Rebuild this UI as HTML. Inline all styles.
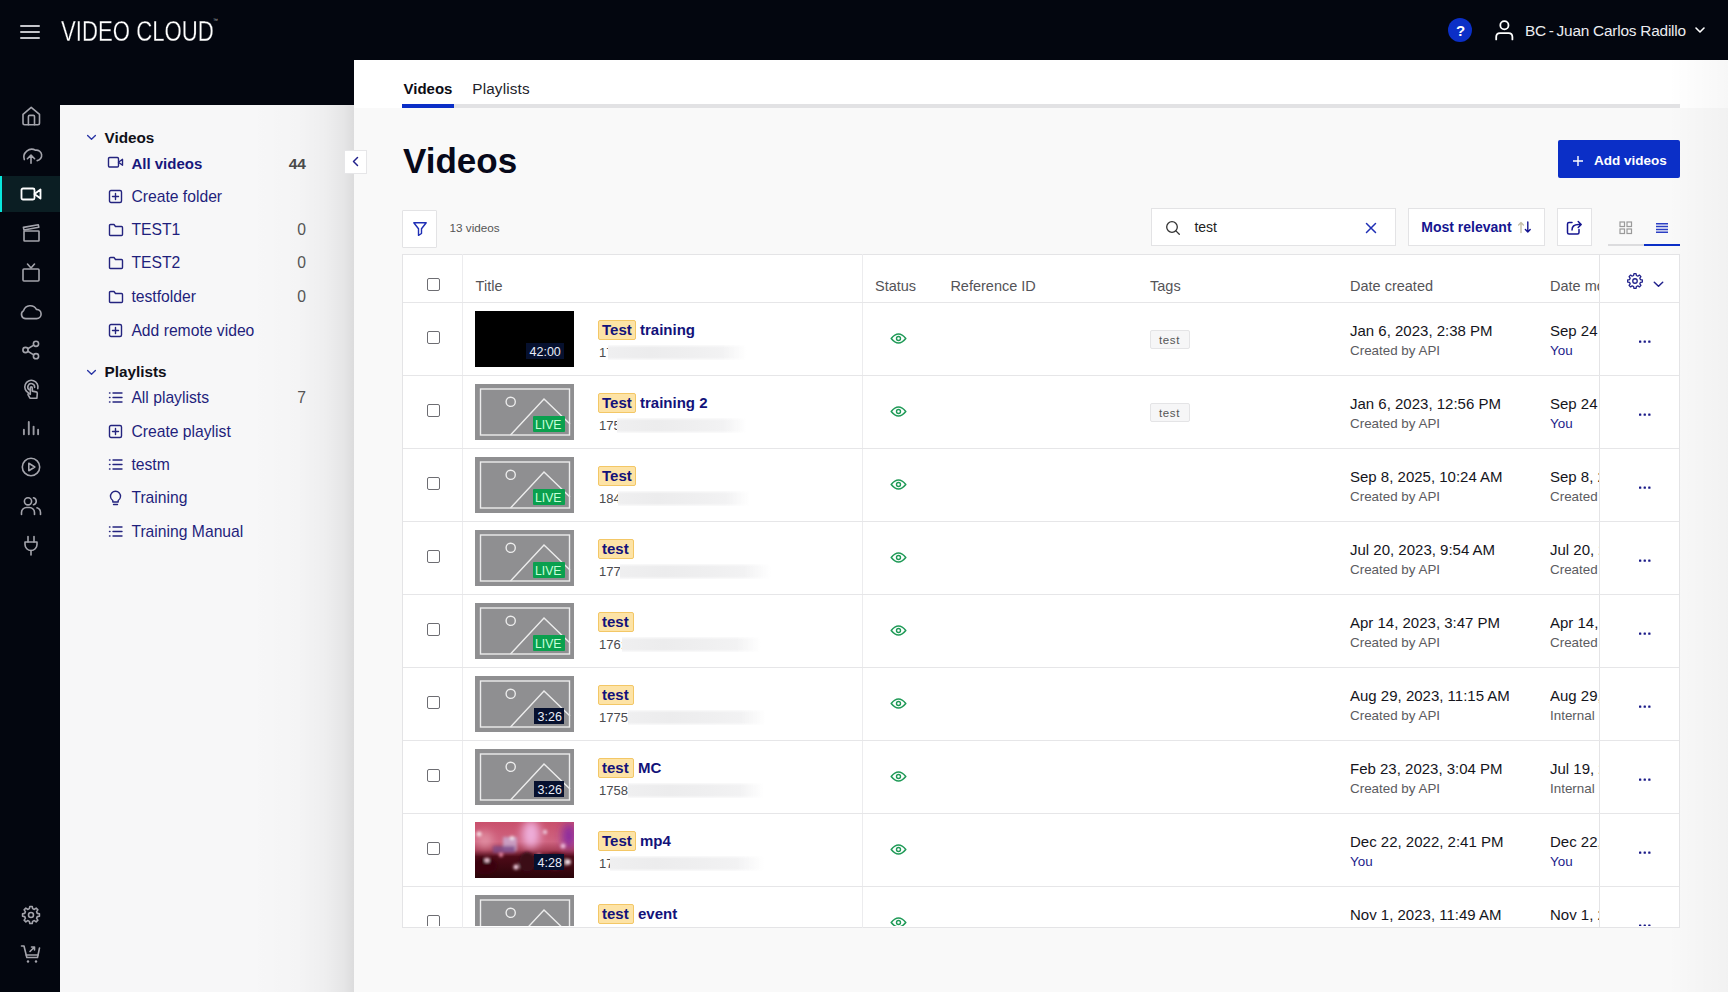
<!DOCTYPE html>
<html><head><meta charset="utf-8"><style>
*{box-sizing:border-box;margin:0;padding:0}
html,body{width:1728px;height:992px;overflow:hidden;background:#03060f;font-family:"Liberation Sans",sans-serif;position:relative}
.a{position:absolute}
.t{position:absolute;white-space:nowrap}
svg.a{overflow:visible}
</style></head><body>
<div class="a" style="left:0px;top:0px;width:1728px;height:60px;background:#03060f"></div>
<div class="a" style="left:354px;top:60px;width:1374px;height:932px;background:#f9f9f9"></div>
<div class="a" style="left:354px;top:60px;width:1374px;height:48px;background:#fff"></div>
<div class="a" style="left:60px;top:105px;width:294px;height:887px;background:#f7f7f8"></div>
<div class="a" style="left:250px;top:105px;width:104px;height:887px;background:linear-gradient(to right,rgba(0,0,0,0),rgba(0,0,0,0.012) 45%,rgba(0,0,0,0.035) 72%,rgba(0,0,0,0.07) 90%,rgba(0,0,0,0.11))"></div>
<div class="a" style="left:1668px;top:60px;width:60px;height:932px;background:linear-gradient(to right,rgba(0,0,0,0),rgba(0,0,0,0.03))"></div>
<div class="a" style="left:20px;top:25px;width:20px;height:2px;background:#c4c4ca;border-radius:1px"></div>
<div class="a" style="left:20px;top:31px;width:20px;height:2px;background:#c4c4ca;border-radius:1px"></div>
<div class="a" style="left:20px;top:37px;width:20px;height:2px;background:#c4c4ca;border-radius:1px"></div>
<div class="t" style="left:60.5px;top:10.60px;font-size:30px;line-height:39px;color:#fff;font-weight:400;transform:scaleX(0.739);transform-origin:0 0;-webkit-text-stroke:0.3px #03060f">VIDEO CLOUD</div>
<div class="t" style="left:213px;top:17.27px;font-size:5px;line-height:6px;color:#bbb;font-weight:400;">&#8482;</div>
<div class="a" style="left:1448px;top:18px;width:24px;height:24px;background:#0b2fc7;border-radius:50%"></div>
<div class="t" style="left:1456px;top:20.80px;font-size:15px;line-height:20px;color:#fff;font-weight:700;">?</div>
<svg class="a" style="left:1494px;top:20px;" width="20" height="21" viewBox="0 0 20 21"><circle cx="10.4" cy="5.2" r="4.1" fill="none" stroke="#fff" stroke-width="1.8"/><path d="M2.2 19.4 V17 Q2.2 13.2 6 13.2 H14.6 Q18.4 13.2 18.4 17 V19.4" fill="none" stroke="#fff" stroke-width="1.8" stroke-linecap="round"/></svg>
<div class="t" style="left:1525px;top:20.86px;font-size:15.4px;line-height:20px;color:#ececf0;font-weight:400;letter-spacing:-0.22px">BC&#8201;-&#8201;Juan Carlos Radillo</div>
<svg class="a" style="left:1695px;top:27px;" width="10" height="7" viewBox="0 0 10 7"><path d="M1 1 L5 5 L9 1" fill="none" stroke="#fff" stroke-width="1.6" stroke-linecap="round" stroke-linejoin="round"/></svg>
<div class="a" style="left:0px;top:176px;width:60px;height:36px;background:#0b1e23"></div>
<div class="a" style="left:0px;top:176px;width:2.3px;height:36px;background:#08e6dc"></div>
<svg class="a" style="left:20.0px;top:105.0px;" width="22" height="22" viewBox="0 0 22 22"><path d="M3 9.4 L11.2 2.3 L19.5 9.4 V18 Q19.5 19.7 17.8 19.7 H4.7 Q3 19.7 3 18 Z" fill="none" stroke="#a4a4ac" stroke-width="1.6" stroke-linecap="round" stroke-linejoin="round"/><path d="M8.4 19.7 V11.6 Q8.4 10.4 9.6 10.4 H13.3 Q14.5 10.4 14.5 11.6 V19.7" fill="none" stroke="#a4a4ac" stroke-width="1.6" stroke-linecap="round" stroke-linejoin="round"/></svg>
<svg class="a" style="left:20.0px;top:144.0px;" width="22" height="22" viewBox="0 0 22 22"><path d="M4.3 15.6 A7.9 7.9 0 0 1 15.6 6.2 A5.1 5.1 0 0 1 17.2 16.6" fill="none" stroke="#a4a4ac" stroke-width="1.6" stroke-linecap="round" stroke-linejoin="round"/><path d="M11 19.2 V11.3 M7.4 14.7 L11 11.1 L14.6 14.7" fill="none" stroke="#a4a4ac" stroke-width="1.6" stroke-linecap="round" stroke-linejoin="round"/></svg>
<svg class="a" style="left:20.0px;top:183.0px;" width="22" height="22" viewBox="0 0 22 22"><rect x="1.5" y="5.5" width="13" height="11" rx="1.5" fill="none" stroke="#fff" stroke-width="1.8" stroke-linecap="round" stroke-linejoin="round"/><path d="M14.5 11 L20.5 6.5 V15.5 Z" fill="none" stroke="#fff" stroke-width="1.8" stroke-linecap="round" stroke-linejoin="round"/></svg>
<svg class="a" style="left:20.0px;top:222.0px;" width="22" height="22" viewBox="0 0 22 22"><rect x="4" y="9" width="15" height="10" rx="0.6" fill="none" stroke="#a4a4ac" stroke-width="1.6" stroke-linecap="round" stroke-linejoin="round"/><path d="M3.4 5.4 L18.3 2.8 L18.8 5.2 L4 8 Z" fill="none" stroke="#a4a4ac" stroke-width="1.6" stroke-linecap="round" stroke-linejoin="round"/></svg>
<svg class="a" style="left:20.0px;top:261.0px;" width="22" height="22" viewBox="0 0 22 22"><rect x="3" y="8" width="16" height="12" rx="1" fill="none" stroke="#a4a4ac" stroke-width="1.6" stroke-linecap="round" stroke-linejoin="round"/><path d="M7.5 3 L11 7 L14.5 3" fill="none" stroke="#a4a4ac" stroke-width="1.6" stroke-linecap="round" stroke-linejoin="round"/></svg>
<svg class="a" style="left:20.0px;top:300.0px;" width="22" height="22" viewBox="0 0 22 22"><path d="M5.8 18.6 A4.3 4.3 0 0 1 3.6 10.6 A7 7 0 0 1 16.4 9.4 A4.6 4.6 0 0 1 16.6 18.6 Z" fill="none" stroke="#a4a4ac" stroke-width="1.6" stroke-linecap="round" stroke-linejoin="round"/></svg>
<svg class="a" style="left:20.0px;top:339.0px;" width="22" height="22" viewBox="0 0 22 22"><circle cx="5.5" cy="11" r="2.6" fill="none" stroke="#a4a4ac" stroke-width="1.6" stroke-linecap="round" stroke-linejoin="round"/><circle cx="16" cy="4.8" r="2.6" fill="none" stroke="#a4a4ac" stroke-width="1.6" stroke-linecap="round" stroke-linejoin="round"/><circle cx="16" cy="17.2" r="2.6" fill="none" stroke="#a4a4ac" stroke-width="1.6" stroke-linecap="round" stroke-linejoin="round"/><path d="M7.8 9.7 L13.7 6.1 M7.8 12.3 L13.7 15.9" fill="none" stroke="#a4a4ac" stroke-width="1.6" stroke-linecap="round" stroke-linejoin="round"/></svg>
<svg class="a" style="left:20px;top:379px;" width="22" height="22" viewBox="0 0 22 22"><path d="M8.6 13.9 A6.6 6.6 0 1 1 17.8 9.6" fill="none" stroke="#a4a4ac" stroke-width="1.6" stroke-linecap="round" stroke-linejoin="round"/><path d="M9.3 10.8 A3.4 3.4 0 1 1 14.6 8.4" fill="none" stroke="#a4a4ac" stroke-width="1.6" stroke-linecap="round" stroke-linejoin="round"/><path d="M10 19.2 L8.1 15.8 Q7.7 14.8 8.7 14.6 L10.3 15.3 V8.9 Q10.3 7.9 11.3 7.9 Q12.3 7.9 12.3 8.9 V12.1 L16.1 12.9 Q17.4 13.2 17.3 14.5 L16.9 19.2 Z" fill="none" stroke="#a4a4ac" stroke-width="1.6" stroke-linecap="round" stroke-linejoin="round"/></svg>
<svg class="a" style="left:19.0px;top:417.0px;" width="24" height="22" viewBox="0 0 24 22"><path d="M4.9 12.8 V17.2 M9.8 5 V17.2 M14.6 9.6 V17.2 M19.1 12.8 V17.2" fill="none" stroke="#9a9aa2" stroke-width="1.9" stroke-linecap="round"/></svg>
<svg class="a" style="left:20.0px;top:456.0px;" width="22" height="22" viewBox="0 0 22 22"><circle cx="11" cy="11" r="8.7" fill="none" stroke="#a4a4ac" stroke-width="1.6" stroke-linecap="round" stroke-linejoin="round"/><path d="M8.8 7.3 L14.8 11 L8.8 14.7 Z" fill="none" stroke="#a4a4ac" stroke-width="1.6" stroke-linecap="round" stroke-linejoin="round"/></svg>
<svg class="a" style="left:20.0px;top:495.0px;" width="22" height="22" viewBox="0 0 22 22"><circle cx="8" cy="6.3" r="3.6" fill="none" stroke="#a4a4ac" stroke-width="1.6" stroke-linecap="round" stroke-linejoin="round"/><path d="M1.5 19.5 V17.5 A5 5 0 0 1 6.5 12.5 H9.5 A5 5 0 0 1 14.5 17.5 V19.5" fill="none" stroke="#a4a4ac" stroke-width="1.6" stroke-linecap="round" stroke-linejoin="round"/><path d="M13.5 2.8 A3.6 3.6 0 0 1 13.5 9.8 M17 12.8 A5 5 0 0 1 20.5 17.5 V19.5" fill="none" stroke="#a4a4ac" stroke-width="1.6" stroke-linecap="round" stroke-linejoin="round"/></svg>
<svg class="a" style="left:20.0px;top:534.0px;" width="22" height="22" viewBox="0 0 22 22"><path d="M5 8 H17 V10.5 A6 6 0 0 1 5 10.5 Z" fill="none" stroke="#a4a4ac" stroke-width="1.6" stroke-linecap="round" stroke-linejoin="round"/><path d="M8 8 V2.5 M14 8 V2.5 M11 16.5 V21" fill="none" stroke="#a4a4ac" stroke-width="1.6" stroke-linecap="round" stroke-linejoin="round"/></svg>
<svg class="a" style="left:20px;top:903.5px;" width="22" height="22" viewBox="0 0 22 22"><g transform="translate(11,11) scale(0.86) translate(-11,-11.7)"><path d="M9.6 1.8 H12.4 L12.9 4.3 L14.9 5.2 L17 3.7 L19 5.7 L17.5 7.8 L18.3 9.8 L20.8 10.3 V13.1 L18.3 13.6 L17.5 15.6 L19 17.7 L17 19.7 L14.9 18.2 L12.9 19.1 L12.4 21.6 H9.6 L9.1 19.1 L7.1 18.2 L5 19.7 L3 17.7 L4.5 15.6 L3.7 13.6 L1.2 13.1 V10.3 L3.7 9.8 L4.5 7.8 L3 5.7 L5 3.7 L7.1 5.2 L9.1 4.3 Z" fill="none" stroke="#a4a4ac" stroke-width="1.85" stroke-linejoin="round"/><circle cx="11" cy="11.7" r="2.9" fill="none" stroke="#a4a4ac" stroke-width="1.85"/></g></svg>
<svg class="a" style="left:20.0px;top:942.5px;" width="22" height="22" viewBox="0 0 22 22"><path d="M1.5 3 H4 L6.8 14.5 H17.5 L19.5 5" fill="none" stroke="#a4a4ac" stroke-width="1.6" stroke-linecap="round" stroke-linejoin="round"/><path d="M6.2 12 H18" fill="none" stroke="#a4a4ac" stroke-width="1.6" stroke-linecap="round" stroke-linejoin="round"/><path d="M10 8.5 L14.5 4 M11.5 4 H14.5 V7" fill="none" stroke="#a4a4ac" stroke-width="1.6" stroke-linecap="round" stroke-linejoin="round"/><circle cx="8" cy="18.5" r="1.2" fill="#a4a4ac"/><circle cx="16" cy="18.5" r="1.2" fill="#a4a4ac"/></svg>
<svg class="a" style="left:86px;top:134.3px;" width="11" height="7" viewBox="0 0 11 7"><path d="M1.6 1.4 L5.5 5.2 L9.4 1.4" fill="none" stroke="#2a36a6" stroke-width="1.35" stroke-linecap="round" stroke-linejoin="round"/></svg>
<div class="t" style="left:104.5px;top:127.90px;font-size:15.3px;line-height:20px;color:#101018;font-weight:700;">Videos</div>
<svg class="a" style="left:107px;top:156px;" width="17" height="13" viewBox="0 0 17 13"><rect x="1.5" y="1.5" width="10" height="9.5" rx="1.2" fill="none" stroke="#24247f" stroke-width="1.4" stroke-linecap="round" stroke-linejoin="round"/><path d="M11.5 6.3 L15.5 3.3 V9.3 Z" fill="none" stroke="#24247f" stroke-width="1.4" stroke-linecap="round" stroke-linejoin="round"/></svg>
<div class="t" style="left:131.4px;top:154.10px;font-size:15px;line-height:20px;color:#17177c;font-weight:700;">All videos</div>
<div class="t" style="right:1422px;top:153.93px;font-size:15.5px;line-height:20px;color:#4a4a4a;font-weight:700;text-align:right;">44</div>
<svg class="a" style="left:108px;top:189px;" width="15" height="15" viewBox="0 0 15 15"><rect x="1.5" y="1.5" width="12" height="12" rx="1.5" fill="none" stroke="#24247f" stroke-width="1.4" stroke-linecap="round" stroke-linejoin="round"/><path d="M7.5 4.5 V10.5 M4.5 7.5 H10.5" fill="none" stroke="#24247f" stroke-width="1.4" stroke-linecap="round" stroke-linejoin="round"/></svg>
<div class="t" style="left:131.4px;top:187.36px;font-size:15.7px;line-height:20px;color:#1f1f7c;font-weight:400;">Create folder</div>
<svg class="a" style="left:107.5px;top:222.8px;" width="16" height="14" viewBox="0 0 16 14"><path d="M1.5 2.5 Q1.5 1.5 2.5 1.5 H6 L7.5 3.5 H13.5 Q14.5 3.5 14.5 4.5 V11.5 Q14.5 12.5 13.5 12.5 H2.5 Q1.5 12.5 1.5 11.5 Z" fill="none" stroke="#24247f" stroke-width="1.4" stroke-linecap="round" stroke-linejoin="round"/></svg>
<div class="t" style="left:131.4px;top:220.26px;font-size:15.7px;line-height:20px;color:#1f1f7c;font-weight:400;">TEST1</div>
<div class="t" style="right:1422px;top:220.26px;font-size:15.7px;line-height:20px;color:#555;font-weight:400;text-align:right;">0</div>
<svg class="a" style="left:107.5px;top:256.0px;" width="16" height="14" viewBox="0 0 16 14"><path d="M1.5 2.5 Q1.5 1.5 2.5 1.5 H6 L7.5 3.5 H13.5 Q14.5 3.5 14.5 4.5 V11.5 Q14.5 12.5 13.5 12.5 H2.5 Q1.5 12.5 1.5 11.5 Z" fill="none" stroke="#24247f" stroke-width="1.4" stroke-linecap="round" stroke-linejoin="round"/></svg>
<div class="t" style="left:131.4px;top:253.46px;font-size:15.7px;line-height:20px;color:#1f1f7c;font-weight:400;">TEST2</div>
<div class="t" style="right:1422px;top:253.46px;font-size:15.7px;line-height:20px;color:#555;font-weight:400;text-align:right;">0</div>
<svg class="a" style="left:107.5px;top:289.5px;" width="16" height="14" viewBox="0 0 16 14"><path d="M1.5 2.5 Q1.5 1.5 2.5 1.5 H6 L7.5 3.5 H13.5 Q14.5 3.5 14.5 4.5 V11.5 Q14.5 12.5 13.5 12.5 H2.5 Q1.5 12.5 1.5 11.5 Z" fill="none" stroke="#24247f" stroke-width="1.4" stroke-linecap="round" stroke-linejoin="round"/></svg>
<div class="t" style="left:131.4px;top:286.96px;font-size:15.7px;line-height:20px;color:#1f1f7c;font-weight:400;">testfolder</div>
<div class="t" style="right:1422px;top:286.96px;font-size:15.7px;line-height:20px;color:#555;font-weight:400;text-align:right;">0</div>
<svg class="a" style="left:108px;top:323px;" width="15" height="15" viewBox="0 0 15 15"><rect x="1.5" y="1.5" width="12" height="12" rx="1.5" fill="none" stroke="#24247f" stroke-width="1.4" stroke-linecap="round" stroke-linejoin="round"/><path d="M7.5 4.5 V10.5 M4.5 7.5 H10.5" fill="none" stroke="#24247f" stroke-width="1.4" stroke-linecap="round" stroke-linejoin="round"/></svg>
<div class="t" style="left:131.4px;top:320.76px;font-size:15.7px;line-height:20px;color:#1f1f7c;font-weight:400;">Add remote video</div>
<svg class="a" style="left:86px;top:368.8px;" width="11" height="7" viewBox="0 0 11 7"><path d="M1.6 1.4 L5.5 5.2 L9.4 1.4" fill="none" stroke="#2a36a6" stroke-width="1.35" stroke-linecap="round" stroke-linejoin="round"/></svg>
<div class="t" style="left:104.5px;top:362.00px;font-size:15.3px;line-height:20px;color:#101018;font-weight:700;">Playlists</div>
<svg class="a" style="left:108px;top:391px;" width="15" height="13" viewBox="0 0 15 13"><path d="M5 2 H14 M5 6.5 H14 M5 11 H14" fill="none" stroke="#24247f" stroke-width="1.4" stroke-linecap="round" stroke-linejoin="round"/><path d="M1.5 2 H2 M1.5 6.5 H2 M1.5 11 H2" fill="none" stroke="#24247f" stroke-width="1.4" stroke-linecap="round" stroke-linejoin="round"/></svg>
<div class="t" style="left:131.4px;top:387.96px;font-size:15.7px;line-height:20px;color:#1f1f7c;font-weight:400;">All playlists</div>
<div class="t" style="right:1422px;top:387.96px;font-size:15.7px;line-height:20px;color:#555;font-weight:400;text-align:right;">7</div>
<svg class="a" style="left:108px;top:423.5px;" width="15" height="15" viewBox="0 0 15 15"><rect x="1.5" y="1.5" width="12" height="12" rx="1.5" fill="none" stroke="#24247f" stroke-width="1.4" stroke-linecap="round" stroke-linejoin="round"/><path d="M7.5 4.5 V10.5 M4.5 7.5 H10.5" fill="none" stroke="#24247f" stroke-width="1.4" stroke-linecap="round" stroke-linejoin="round"/></svg>
<div class="t" style="left:131.4px;top:421.56px;font-size:15.7px;line-height:20px;color:#1f1f7c;font-weight:400;">Create playlist</div>
<svg class="a" style="left:108px;top:457.5px;" width="15" height="13" viewBox="0 0 15 13"><path d="M5 2 H14 M5 6.5 H14 M5 11 H14" fill="none" stroke="#24247f" stroke-width="1.4" stroke-linecap="round" stroke-linejoin="round"/><path d="M1.5 2 H2 M1.5 6.5 H2 M1.5 11 H2" fill="none" stroke="#24247f" stroke-width="1.4" stroke-linecap="round" stroke-linejoin="round"/></svg>
<div class="t" style="left:131.4px;top:454.66px;font-size:15.7px;line-height:20px;color:#1f1f7c;font-weight:400;">testm</div>
<svg class="a" style="left:108px;top:489px;" width="15" height="17" viewBox="0 0 15 17"><path d="M4.8 11.5 A5 5 0 1 1 10.2 11.5 V13 H4.8 Z" fill="none" stroke="#24247f" stroke-width="1.4" stroke-linecap="round" stroke-linejoin="round"/><path d="M5.5 15.5 H9.5" fill="none" stroke="#24247f" stroke-width="1.4" stroke-linecap="round" stroke-linejoin="round"/></svg>
<div class="t" style="left:131.4px;top:488.36px;font-size:15.7px;line-height:20px;color:#1f1f7c;font-weight:400;">Training</div>
<svg class="a" style="left:108px;top:525px;" width="15" height="13" viewBox="0 0 15 13"><path d="M5 2 H14 M5 6.5 H14 M5 11 H14" fill="none" stroke="#24247f" stroke-width="1.4" stroke-linecap="round" stroke-linejoin="round"/><path d="M1.5 2 H2 M1.5 6.5 H2 M1.5 11 H2" fill="none" stroke="#24247f" stroke-width="1.4" stroke-linecap="round" stroke-linejoin="round"/></svg>
<div class="t" style="left:131.4px;top:521.86px;font-size:15.7px;line-height:20px;color:#1f1f7c;font-weight:400;">Training Manual</div>
<div class="a" style="left:344px;top:150px;width:23px;height:24px;background:#fff;border:1px solid #e6e6e8"></div>
<svg class="a" style="left:350px;top:155px;" width="11" height="13" viewBox="0 0 11 13"><path d="M7.5 2.5 L3.5 6.5 L7.5 10.5" fill="none" stroke="#22228c" stroke-width="1.5" stroke-linecap="round" stroke-linejoin="round"/></svg>
<div class="t" style="left:403.5px;top:78.90px;font-size:15px;line-height:20px;color:#0c0c14;font-weight:700;">Videos</div>
<div class="t" style="left:472.3px;top:79.10px;font-size:15.3px;line-height:20px;color:#23232b;font-weight:400;letter-spacing:0.15px">Playlists</div>
<div class="a" style="left:402px;top:104px;width:1278px;height:4px;background:#e2e2e4"></div>
<div class="a" style="left:402px;top:104px;width:52px;height:4px;background:#0b2fc7"></div>
<div class="t" style="left:403px;top:138.07px;font-size:35px;line-height:46px;color:#07091a;font-weight:700;">Videos</div>
<div class="a" style="left:1558px;top:140px;width:122px;height:38px;background:#0b2fc7;border-radius:2px"></div>
<svg class="a" style="left:1572px;top:155px;" width="12" height="12" viewBox="0 0 12 12"><path d="M6 1 V11 M1 6 H11" stroke="#fff" stroke-width="1.4"/></svg>
<div class="t" style="left:1594px;top:152.32px;font-size:13.5px;line-height:18px;color:#fff;font-weight:700;">Add videos</div>
<div class="a" style="left:402px;top:210px;width:35px;height:38px;background:#fff;border:1px solid #e3e3e5;border-radius:1px"></div>
<svg class="a" style="left:412px;top:221px;" width="16" height="16" viewBox="0 0 16 16"><path d="M1.8 1.8 H14.2 L9.5 7.8 V12.5 L6.5 14.3 V7.8 Z" fill="none" stroke="#1f2fb5" stroke-width="1.4" stroke-linejoin="round"/></svg>
<div class="t" style="left:449.6px;top:219.95px;font-size:11.7px;line-height:15px;color:#555;font-weight:400;">13 videos</div>
<div class="a" style="left:1151px;top:208px;width:245px;height:38px;background:#fff;border:1px solid #e3e3e5"></div>
<svg class="a" style="left:1165px;top:220px;" width="16" height="16" viewBox="0 0 16 16"><circle cx="7" cy="7" r="5.3" fill="none" stroke="#333" stroke-width="1.3"/><path d="M10.9 10.9 L14.3 14.3" stroke="#333" stroke-width="1.3" stroke-linecap="round"/></svg>
<div class="t" style="left:1194.4px;top:218.15px;font-size:14px;line-height:18px;color:#222;font-weight:400;">test</div>
<svg class="a" style="left:1365px;top:222px;" width="12" height="12" viewBox="0 0 12 12"><path d="M1.5 1.5 L10.5 10.5 M10.5 1.5 L1.5 10.5" stroke="#1f2fb5" stroke-width="1.5" stroke-linecap="round"/></svg>
<div class="a" style="left:1408px;top:208px;width:137px;height:38px;background:#fff;border:1px solid #e3e3e5"></div>
<div class="t" style="left:1421.3px;top:218.15px;font-size:14px;line-height:18px;color:#151590;font-weight:700;">Most relevant</div>
<svg class="a" style="left:1517px;top:220px;" width="15" height="14" viewBox="0 0 15 14"><path d="M4 12.5 V2.5 M1.6 4.9 L4 2.5 L6.4 4.9" fill="none" stroke="#c5bfa8" stroke-width="1.4" stroke-linecap="round" stroke-linejoin="round"/><path d="M10.8 2 V12 M8.4 9.6 L10.8 12 L13.2 9.6" fill="none" stroke="#151590" stroke-width="1.4" stroke-linecap="round" stroke-linejoin="round"/></svg>
<div class="a" style="left:1557px;top:208px;width:35px;height:38px;background:#fff;border:1px solid #e3e3e5"></div>
<svg class="a" style="left:1565px;top:218px;" width="18" height="18" viewBox="0 0 18 18"><path d="M7 4.5 H4 Q2.5 4.5 2.5 6 V14.5 Q2.5 16 4 16 H12.5 Q14 16 14 14.5 V11.5" fill="none" stroke="#151590" stroke-width="1.5" stroke-linecap="round"/><path d="M7 12 Q7 6.5 13.5 6.5 H16 M13.2 3.5 L16.2 6.5 L13.2 9.5" fill="none" stroke="#151590" stroke-width="1.5" stroke-linecap="round" stroke-linejoin="round"/></svg>
<svg class="a" style="left:1619px;top:221px;" width="14" height="14" viewBox="0 0 14 14"><rect x="1" y="1" width="4.5" height="4.5" fill="none" stroke="#9a9a9a" stroke-width="1.2"/><rect x="8" y="1" width="4.5" height="4.5" fill="none" stroke="#9a9a9a" stroke-width="1.2"/><rect x="1" y="8" width="4.5" height="4.5" fill="none" stroke="#9a9a9a" stroke-width="1.2"/><rect x="8" y="8" width="4.5" height="4.5" fill="none" stroke="#9a9a9a" stroke-width="1.2"/></svg>
<svg class="a" style="left:1655px;top:222px;" width="14" height="12" viewBox="0 0 14 12"><path d="M1 1.8 H13 M1 4.6 H13 M1 7.4 H13 M1 10.2 H13" stroke="#2b3fc4" stroke-width="1.5"/></svg>
<div class="a" style="left:1608px;top:244px;width:36px;height:2px;background:#dcdcde"></div>
<div class="a" style="left:1644px;top:244px;width:36px;height:2.2px;background:#0b2fc7"></div>
<div class="a" style="left:402px;top:254px;width:1278px;height:674px;background:#fff;border:1px solid #e4e4e6"></div>
<div class="a" style="left:1599px;top:254px;width:1px;height:674px;background:#e4e4e6"></div>
<div class="a" style="left:462px;top:254px;width:1px;height:674px;background:#ececee"></div>
<div class="a" style="left:862px;top:254px;width:1px;height:674px;background:#ececee"></div>
<div class="a" style="left:403px;top:302px;width:1276px;height:1px;background:#e6e6e8"></div>
<div class="a" style="left:403px;top:375px;width:1276px;height:1px;background:#e6e6e8"></div>
<div class="a" style="left:403px;top:448px;width:1276px;height:1px;background:#e6e6e8"></div>
<div class="a" style="left:403px;top:521px;width:1276px;height:1px;background:#e6e6e8"></div>
<div class="a" style="left:403px;top:594px;width:1276px;height:1px;background:#e6e6e8"></div>
<div class="a" style="left:403px;top:667px;width:1276px;height:1px;background:#e6e6e8"></div>
<div class="a" style="left:403px;top:740px;width:1276px;height:1px;background:#e6e6e8"></div>
<div class="a" style="left:403px;top:813px;width:1276px;height:1px;background:#e6e6e8"></div>
<div class="a" style="left:403px;top:886px;width:1276px;height:1px;background:#e6e6e8"></div>
<div class="a" style="left:427px;top:278px;width:13px;height:13px;background:#fff;border:1.3px solid #6d6d72;border-radius:2px"></div>
<div class="t" style="left:475.6px;top:277.48px;font-size:14.5px;line-height:19px;color:#545458;font-weight:400;">Title</div>
<div class="t" style="left:875px;top:277.48px;font-size:14.5px;line-height:19px;color:#545458;font-weight:400;">Status</div>
<div class="t" style="left:950.4px;top:277.48px;font-size:14.5px;line-height:19px;color:#545458;font-weight:400;">Reference ID</div>
<div class="t" style="left:1150px;top:277.48px;font-size:14.5px;line-height:19px;color:#545458;font-weight:400;">Tags</div>
<div class="t" style="left:1350px;top:277.48px;font-size:14.5px;line-height:19px;color:#545458;font-weight:400;">Date created</div>
<div class="a" style="left:1550px;top:0;width:49px;height:992px;overflow:hidden"><div class="t" style="left:0px;top:277.48px;font-size:14.5px;line-height:19px;color:#545458;font-weight:400;">Date modified</div></div>
<svg class="a" style="left:1626.3px;top:272.4px;" width="18" height="18" viewBox="0 0 18 18"><g transform="translate(9,9) scale(0.86) translate(-9,-10)"><path d="M7.8 1.5 H10.2 L10.6 3.6 L12.3 4.4 L14.1 3.1 L15.9 4.9 L14.6 6.7 L15.4 8.4 L17.5 8.8 V11.2 L15.4 11.6 L14.6 13.3 L15.9 15.1 L14.1 16.9 L12.3 15.6 L10.6 16.4 L10.2 18.5 H7.8 L7.4 16.4 L5.7 15.6 L3.9 16.9 L2.1 15.1 L3.4 13.3 L2.6 11.6 L0.5 11.2 V8.8 L2.6 8.4 L3.4 6.7 L2.1 4.9 L3.9 3.1 L5.7 4.4 L7.4 3.6 Z" fill="none" stroke="#22228c" stroke-width="1.55" stroke-linejoin="round"/><circle cx="9" cy="10" r="2.6" fill="none" stroke="#22228c" stroke-width="1.55"/></g></svg>
<svg class="a" style="left:1653px;top:281px;" width="11" height="7" viewBox="0 0 11 7"><path d="M1.3 1.3 L5.5 5.3 L9.7 1.3" fill="none" stroke="#22228c" stroke-width="1.5" stroke-linecap="round" stroke-linejoin="round"/></svg>
<div class="a" style="left:403px;top:303px;width:1276px;height:623px;overflow:hidden"><div class="a" style="left:-403px;top:-303px;width:1728px;height:992px"><div class="a" style="left:427px;top:331px;width:13px;height:13px;background:#fff;border:1.3px solid #6d6d72;border-radius:2px"></div>
<div class="a" style="left:475px;top:311px;width:99px;height:56px;background:#000"></div>
<div class="a" style="left:526px;top:343px;width:38px;height:16px;background:#06102e"></div>
<div class="t" style="left:529.5px;top:343.67px;font-size:12.5px;line-height:16px;color:#e8ecf8;font-weight:400;">42:00</div>
<div class="a" style="left:598px;top:320px;width:38px;height:20px;background:#fde3a6;border:1px solid #f3c766;border-radius:2px"></div>
<div class="t" style="left:602px;top:319.80px;font-size:15px;line-height:20px;color:#12127a;font-weight:700;">Test</div>
<div class="t" style="left:640px;top:319.80px;font-size:15px;line-height:20px;color:#12127a;font-weight:700;">training</div>
<div class="t" style="left:599px;top:343.50px;font-size:13px;line-height:17px;color:#4a4a4e;font-weight:400;">17</div>
<div class="a" style="left:608px;top:344.5px;width:139px;height:15px;background:linear-gradient(to right,#efeff0 0%,#ececed 30%,#efeff0 60%,#f2f2f3 82%,rgba(255,255,255,0) 100%);-webkit-mask-image:linear-gradient(to bottom,rgba(0,0,0,0.3) 0,#000 18%,#000 82%,rgba(0,0,0,0.3) 100%)"></div>
<svg class="a" style="left:890px;top:332px;" width="17" height="13" viewBox="0 0 17 13"><path d="M1.2 6.5 Q8.5 -2.5 15.8 6.5 Q8.5 15.5 1.2 6.5 Z" fill="none" stroke="#1f9a57" stroke-width="1.5" stroke-linejoin="round"/><circle cx="8.5" cy="6.5" r="2" fill="none" stroke="#1f9a57" stroke-width="1.4"/></svg>
<div class="a" style="left:1150px;top:330px;width:40px;height:19px;background:#f6f6f7;border:1px solid #e4e4e6;border-radius:2px"></div>
<div class="t" style="left:1159px;top:332.52px;font-size:11.5px;line-height:15px;color:#555;font-weight:400;letter-spacing:0.6px">test</div>
<div class="t" style="left:1350px;top:320.80px;font-size:15px;line-height:20px;color:#15151c;font-weight:400;">Jan 6, 2023, 2:38 PM</div>
<div class="t" style="left:1350px;top:342.16px;font-size:13.4px;line-height:17px;color:#5b5b60;font-weight:400;">Created by API</div>
<div class="a" style="left:1550px;top:0;width:49px;height:992px;overflow:hidden"><div class="t" style="left:0px;top:320.80px;font-size:15px;line-height:20px;color:#15151c;font-weight:400;">Sep 24</div><div class="t" style="left:0px;top:342.16px;font-size:13.4px;line-height:17px;color:#1c1c8a;font-weight:400;">You</div></div>
<svg class="a" style="left:1638px;top:339px;" width="14" height="5" viewBox="0 0 14 5"><rect x="1" y="1.4" width="2.3" height="2.3" rx="0.5" fill="#1a1a88"/><rect x="5.6" y="1.4" width="2.3" height="2.3" rx="0.5" fill="#1a1a88"/><rect x="10.2" y="1.4" width="2.3" height="2.3" rx="0.5" fill="#1a1a88"/></svg>
<div class="a" style="left:427px;top:404px;width:13px;height:13px;background:#fff;border:1.3px solid #6d6d72;border-radius:2px"></div>
<svg class="a" style="left:475px;top:384px;overflow:hidden" width="99" height="56" viewBox="0 0 99 56"><rect width="99" height="56" fill="#8f8f91"/><rect x="5.5" y="5" width="89" height="46" fill="none" stroke="#ececec" stroke-width="1.4"/><circle cx="35.7" cy="17.8" r="4.6" fill="none" stroke="#ececec" stroke-width="1.4"/><path d="M35.5 51 L69 15 L95 40" fill="none" stroke="#ececec" stroke-width="1.4"/></svg>
<div class="a" style="left:532.5px;top:416px;width:32px;height:16px;background:#0aa04e;border-radius:1px"></div>
<div class="t" style="left:535px;top:417.07px;font-size:12.2px;line-height:16px;color:#c6ffd8;font-weight:400;">LIVE</div>
<div class="a" style="left:598px;top:393px;width:38px;height:20px;background:#fde3a6;border:1px solid #f3c766;border-radius:2px"></div>
<div class="t" style="left:602px;top:392.80px;font-size:15px;line-height:20px;color:#12127a;font-weight:700;">Test</div>
<div class="t" style="left:640px;top:392.80px;font-size:15px;line-height:20px;color:#12127a;font-weight:700;">training 2</div>
<div class="t" style="left:599px;top:416.50px;font-size:13px;line-height:17px;color:#4a4a4e;font-weight:400;">175</div>
<div class="a" style="left:617px;top:417.5px;width:130px;height:15px;background:linear-gradient(to right,#efeff0 0%,#ececed 30%,#efeff0 60%,#f2f2f3 82%,rgba(255,255,255,0) 100%);-webkit-mask-image:linear-gradient(to bottom,rgba(0,0,0,0.3) 0,#000 18%,#000 82%,rgba(0,0,0,0.3) 100%)"></div>
<svg class="a" style="left:890px;top:405px;" width="17" height="13" viewBox="0 0 17 13"><path d="M1.2 6.5 Q8.5 -2.5 15.8 6.5 Q8.5 15.5 1.2 6.5 Z" fill="none" stroke="#1f9a57" stroke-width="1.5" stroke-linejoin="round"/><circle cx="8.5" cy="6.5" r="2" fill="none" stroke="#1f9a57" stroke-width="1.4"/></svg>
<div class="a" style="left:1150px;top:403px;width:40px;height:19px;background:#f6f6f7;border:1px solid #e4e4e6;border-radius:2px"></div>
<div class="t" style="left:1159px;top:405.52px;font-size:11.5px;line-height:15px;color:#555;font-weight:400;letter-spacing:0.6px">test</div>
<div class="t" style="left:1350px;top:393.80px;font-size:15px;line-height:20px;color:#15151c;font-weight:400;">Jan 6, 2023, 12:56 PM</div>
<div class="t" style="left:1350px;top:415.16px;font-size:13.4px;line-height:17px;color:#5b5b60;font-weight:400;">Created by API</div>
<div class="a" style="left:1550px;top:0;width:49px;height:992px;overflow:hidden"><div class="t" style="left:0px;top:393.80px;font-size:15px;line-height:20px;color:#15151c;font-weight:400;">Sep 24</div><div class="t" style="left:0px;top:415.16px;font-size:13.4px;line-height:17px;color:#1c1c8a;font-weight:400;">You</div></div>
<svg class="a" style="left:1638px;top:412px;" width="14" height="5" viewBox="0 0 14 5"><rect x="1" y="1.4" width="2.3" height="2.3" rx="0.5" fill="#1a1a88"/><rect x="5.6" y="1.4" width="2.3" height="2.3" rx="0.5" fill="#1a1a88"/><rect x="10.2" y="1.4" width="2.3" height="2.3" rx="0.5" fill="#1a1a88"/></svg>
<div class="a" style="left:427px;top:477px;width:13px;height:13px;background:#fff;border:1.3px solid #6d6d72;border-radius:2px"></div>
<svg class="a" style="left:475px;top:457px;overflow:hidden" width="99" height="56" viewBox="0 0 99 56"><rect width="99" height="56" fill="#8f8f91"/><rect x="5.5" y="5" width="89" height="46" fill="none" stroke="#ececec" stroke-width="1.4"/><circle cx="35.7" cy="17.8" r="4.6" fill="none" stroke="#ececec" stroke-width="1.4"/><path d="M35.5 51 L69 15 L95 40" fill="none" stroke="#ececec" stroke-width="1.4"/></svg>
<div class="a" style="left:532.5px;top:489px;width:32px;height:16px;background:#0aa04e;border-radius:1px"></div>
<div class="t" style="left:535px;top:490.07px;font-size:12.2px;line-height:16px;color:#c6ffd8;font-weight:400;">LIVE</div>
<div class="a" style="left:598px;top:466px;width:38px;height:20px;background:#fde3a6;border:1px solid #f3c766;border-radius:2px"></div>
<div class="t" style="left:602px;top:465.80px;font-size:15px;line-height:20px;color:#12127a;font-weight:700;">Test</div>
<div class="t" style="left:599px;top:489.50px;font-size:13px;line-height:17px;color:#4a4a4e;font-weight:400;">184</div>
<div class="a" style="left:618px;top:490.5px;width:132px;height:15px;background:linear-gradient(to right,#efeff0 0%,#ececed 30%,#efeff0 60%,#f2f2f3 82%,rgba(255,255,255,0) 100%);-webkit-mask-image:linear-gradient(to bottom,rgba(0,0,0,0.3) 0,#000 18%,#000 82%,rgba(0,0,0,0.3) 100%)"></div>
<svg class="a" style="left:890px;top:478px;" width="17" height="13" viewBox="0 0 17 13"><path d="M1.2 6.5 Q8.5 -2.5 15.8 6.5 Q8.5 15.5 1.2 6.5 Z" fill="none" stroke="#1f9a57" stroke-width="1.5" stroke-linejoin="round"/><circle cx="8.5" cy="6.5" r="2" fill="none" stroke="#1f9a57" stroke-width="1.4"/></svg>
<div class="t" style="left:1350px;top:466.80px;font-size:15px;line-height:20px;color:#15151c;font-weight:400;">Sep 8, 2025, 10:24 AM</div>
<div class="t" style="left:1350px;top:488.16px;font-size:13.4px;line-height:17px;color:#5b5b60;font-weight:400;">Created by API</div>
<div class="a" style="left:1550px;top:0;width:49px;height:992px;overflow:hidden"><div class="t" style="left:0px;top:466.80px;font-size:15px;line-height:20px;color:#15151c;font-weight:400;">Sep 8, 2025</div><div class="t" style="left:0px;top:488.16px;font-size:13.4px;line-height:17px;color:#5b5b60;font-weight:400;">Created by API</div></div>
<svg class="a" style="left:1638px;top:485px;" width="14" height="5" viewBox="0 0 14 5"><rect x="1" y="1.4" width="2.3" height="2.3" rx="0.5" fill="#1a1a88"/><rect x="5.6" y="1.4" width="2.3" height="2.3" rx="0.5" fill="#1a1a88"/><rect x="10.2" y="1.4" width="2.3" height="2.3" rx="0.5" fill="#1a1a88"/></svg>
<div class="a" style="left:427px;top:550px;width:13px;height:13px;background:#fff;border:1.3px solid #6d6d72;border-radius:2px"></div>
<svg class="a" style="left:475px;top:530px;overflow:hidden" width="99" height="56" viewBox="0 0 99 56"><rect width="99" height="56" fill="#8f8f91"/><rect x="5.5" y="5" width="89" height="46" fill="none" stroke="#ececec" stroke-width="1.4"/><circle cx="35.7" cy="17.8" r="4.6" fill="none" stroke="#ececec" stroke-width="1.4"/><path d="M35.5 51 L69 15 L95 40" fill="none" stroke="#ececec" stroke-width="1.4"/></svg>
<div class="a" style="left:532.5px;top:562px;width:32px;height:16px;background:#0aa04e;border-radius:1px"></div>
<div class="t" style="left:535px;top:563.07px;font-size:12.2px;line-height:16px;color:#c6ffd8;font-weight:400;">LIVE</div>
<div class="a" style="left:598px;top:539px;width:36px;height:20px;background:#fde3a6;border:1px solid #f3c766;border-radius:2px"></div>
<div class="t" style="left:602px;top:538.80px;font-size:15px;line-height:20px;color:#12127a;font-weight:700;">test</div>
<div class="t" style="left:599px;top:562.50px;font-size:13px;line-height:17px;color:#4a4a4e;font-weight:400;">177</div>
<div class="a" style="left:620px;top:563.5px;width:151px;height:15px;background:linear-gradient(to right,#efeff0 0%,#ececed 30%,#efeff0 60%,#f2f2f3 82%,rgba(255,255,255,0) 100%);-webkit-mask-image:linear-gradient(to bottom,rgba(0,0,0,0.3) 0,#000 18%,#000 82%,rgba(0,0,0,0.3) 100%)"></div>
<svg class="a" style="left:890px;top:551px;" width="17" height="13" viewBox="0 0 17 13"><path d="M1.2 6.5 Q8.5 -2.5 15.8 6.5 Q8.5 15.5 1.2 6.5 Z" fill="none" stroke="#1f9a57" stroke-width="1.5" stroke-linejoin="round"/><circle cx="8.5" cy="6.5" r="2" fill="none" stroke="#1f9a57" stroke-width="1.4"/></svg>
<div class="t" style="left:1350px;top:539.80px;font-size:15px;line-height:20px;color:#15151c;font-weight:400;">Jul 20, 2023, 9:54 AM</div>
<div class="t" style="left:1350px;top:561.16px;font-size:13.4px;line-height:17px;color:#5b5b60;font-weight:400;">Created by API</div>
<div class="a" style="left:1550px;top:0;width:49px;height:992px;overflow:hidden"><div class="t" style="left:0px;top:539.80px;font-size:15px;line-height:20px;color:#15151c;font-weight:400;">Jul 20, 2023</div><div class="t" style="left:0px;top:561.16px;font-size:13.4px;line-height:17px;color:#5b5b60;font-weight:400;">Created by API</div></div>
<svg class="a" style="left:1638px;top:558px;" width="14" height="5" viewBox="0 0 14 5"><rect x="1" y="1.4" width="2.3" height="2.3" rx="0.5" fill="#1a1a88"/><rect x="5.6" y="1.4" width="2.3" height="2.3" rx="0.5" fill="#1a1a88"/><rect x="10.2" y="1.4" width="2.3" height="2.3" rx="0.5" fill="#1a1a88"/></svg>
<div class="a" style="left:427px;top:623px;width:13px;height:13px;background:#fff;border:1.3px solid #6d6d72;border-radius:2px"></div>
<svg class="a" style="left:475px;top:603px;overflow:hidden" width="99" height="56" viewBox="0 0 99 56"><rect width="99" height="56" fill="#8f8f91"/><rect x="5.5" y="5" width="89" height="46" fill="none" stroke="#ececec" stroke-width="1.4"/><circle cx="35.7" cy="17.8" r="4.6" fill="none" stroke="#ececec" stroke-width="1.4"/><path d="M35.5 51 L69 15 L95 40" fill="none" stroke="#ececec" stroke-width="1.4"/></svg>
<div class="a" style="left:532.5px;top:635px;width:32px;height:16px;background:#0aa04e;border-radius:1px"></div>
<div class="t" style="left:535px;top:636.07px;font-size:12.2px;line-height:16px;color:#c6ffd8;font-weight:400;">LIVE</div>
<div class="a" style="left:598px;top:612px;width:36px;height:20px;background:#fde3a6;border:1px solid #f3c766;border-radius:2px"></div>
<div class="t" style="left:602px;top:611.80px;font-size:15px;line-height:20px;color:#12127a;font-weight:700;">test</div>
<div class="t" style="left:599px;top:635.50px;font-size:13px;line-height:17px;color:#4a4a4e;font-weight:400;">176:</div>
<div class="a" style="left:622px;top:636.5px;width:139px;height:15px;background:linear-gradient(to right,#efeff0 0%,#ececed 30%,#efeff0 60%,#f2f2f3 82%,rgba(255,255,255,0) 100%);-webkit-mask-image:linear-gradient(to bottom,rgba(0,0,0,0.3) 0,#000 18%,#000 82%,rgba(0,0,0,0.3) 100%)"></div>
<svg class="a" style="left:890px;top:624px;" width="17" height="13" viewBox="0 0 17 13"><path d="M1.2 6.5 Q8.5 -2.5 15.8 6.5 Q8.5 15.5 1.2 6.5 Z" fill="none" stroke="#1f9a57" stroke-width="1.5" stroke-linejoin="round"/><circle cx="8.5" cy="6.5" r="2" fill="none" stroke="#1f9a57" stroke-width="1.4"/></svg>
<div class="t" style="left:1350px;top:612.80px;font-size:15px;line-height:20px;color:#15151c;font-weight:400;">Apr 14, 2023, 3:47 PM</div>
<div class="t" style="left:1350px;top:634.16px;font-size:13.4px;line-height:17px;color:#5b5b60;font-weight:400;">Created by API</div>
<div class="a" style="left:1550px;top:0;width:49px;height:992px;overflow:hidden"><div class="t" style="left:0px;top:612.80px;font-size:15px;line-height:20px;color:#15151c;font-weight:400;">Apr 14, 2023</div><div class="t" style="left:0px;top:634.16px;font-size:13.4px;line-height:17px;color:#5b5b60;font-weight:400;">Created by API</div></div>
<svg class="a" style="left:1638px;top:631px;" width="14" height="5" viewBox="0 0 14 5"><rect x="1" y="1.4" width="2.3" height="2.3" rx="0.5" fill="#1a1a88"/><rect x="5.6" y="1.4" width="2.3" height="2.3" rx="0.5" fill="#1a1a88"/><rect x="10.2" y="1.4" width="2.3" height="2.3" rx="0.5" fill="#1a1a88"/></svg>
<div class="a" style="left:427px;top:696px;width:13px;height:13px;background:#fff;border:1.3px solid #6d6d72;border-radius:2px"></div>
<svg class="a" style="left:475px;top:676px;overflow:hidden" width="99" height="56" viewBox="0 0 99 56"><rect width="99" height="56" fill="#8f8f91"/><rect x="5.5" y="5" width="89" height="46" fill="none" stroke="#ececec" stroke-width="1.4"/><circle cx="35.7" cy="17.8" r="4.6" fill="none" stroke="#ececec" stroke-width="1.4"/><path d="M35.5 51 L69 15 L95 40" fill="none" stroke="#ececec" stroke-width="1.4"/></svg>
<div class="a" style="left:534px;top:708px;width:30px;height:16px;background:#06102e"></div>
<div class="t" style="left:537.5px;top:708.67px;font-size:12.5px;line-height:16px;color:#e8ecf8;font-weight:400;">3:26</div>
<div class="a" style="left:598px;top:685px;width:36px;height:20px;background:#fde3a6;border:1px solid #f3c766;border-radius:2px"></div>
<div class="t" style="left:602px;top:684.80px;font-size:15px;line-height:20px;color:#12127a;font-weight:700;">test</div>
<div class="t" style="left:599px;top:708.50px;font-size:13px;line-height:17px;color:#4a4a4e;font-weight:400;">1775</div>
<div class="a" style="left:628px;top:709.5px;width:138px;height:15px;background:linear-gradient(to right,#efeff0 0%,#ececed 30%,#efeff0 60%,#f2f2f3 82%,rgba(255,255,255,0) 100%);-webkit-mask-image:linear-gradient(to bottom,rgba(0,0,0,0.3) 0,#000 18%,#000 82%,rgba(0,0,0,0.3) 100%)"></div>
<svg class="a" style="left:890px;top:697px;" width="17" height="13" viewBox="0 0 17 13"><path d="M1.2 6.5 Q8.5 -2.5 15.8 6.5 Q8.5 15.5 1.2 6.5 Z" fill="none" stroke="#1f9a57" stroke-width="1.5" stroke-linejoin="round"/><circle cx="8.5" cy="6.5" r="2" fill="none" stroke="#1f9a57" stroke-width="1.4"/></svg>
<div class="t" style="left:1350px;top:685.80px;font-size:15px;line-height:20px;color:#15151c;font-weight:400;">Aug 29, 2023, 11:15 AM</div>
<div class="t" style="left:1350px;top:707.16px;font-size:13.4px;line-height:17px;color:#5b5b60;font-weight:400;">Created by API</div>
<div class="a" style="left:1550px;top:0;width:49px;height:992px;overflow:hidden"><div class="t" style="left:0px;top:685.80px;font-size:15px;line-height:20px;color:#15151c;font-weight:400;">Aug 29, 2023</div><div class="t" style="left:0px;top:707.16px;font-size:13.4px;line-height:17px;color:#5b5b60;font-weight:400;">Internal</div></div>
<svg class="a" style="left:1638px;top:704px;" width="14" height="5" viewBox="0 0 14 5"><rect x="1" y="1.4" width="2.3" height="2.3" rx="0.5" fill="#1a1a88"/><rect x="5.6" y="1.4" width="2.3" height="2.3" rx="0.5" fill="#1a1a88"/><rect x="10.2" y="1.4" width="2.3" height="2.3" rx="0.5" fill="#1a1a88"/></svg>
<div class="a" style="left:427px;top:769px;width:13px;height:13px;background:#fff;border:1.3px solid #6d6d72;border-radius:2px"></div>
<svg class="a" style="left:475px;top:749px;overflow:hidden" width="99" height="56" viewBox="0 0 99 56"><rect width="99" height="56" fill="#8f8f91"/><rect x="5.5" y="5" width="89" height="46" fill="none" stroke="#ececec" stroke-width="1.4"/><circle cx="35.7" cy="17.8" r="4.6" fill="none" stroke="#ececec" stroke-width="1.4"/><path d="M35.5 51 L69 15 L95 40" fill="none" stroke="#ececec" stroke-width="1.4"/></svg>
<div class="a" style="left:534px;top:781px;width:30px;height:16px;background:#06102e"></div>
<div class="t" style="left:537.5px;top:781.67px;font-size:12.5px;line-height:16px;color:#e8ecf8;font-weight:400;">3:26</div>
<div class="a" style="left:598px;top:758px;width:36px;height:20px;background:#fde3a6;border:1px solid #f3c766;border-radius:2px"></div>
<div class="t" style="left:602px;top:757.80px;font-size:15px;line-height:20px;color:#12127a;font-weight:700;">test</div>
<div class="t" style="left:638px;top:757.80px;font-size:15px;line-height:20px;color:#12127a;font-weight:700;">MC</div>
<div class="t" style="left:599px;top:781.50px;font-size:13px;line-height:17px;color:#4a4a4e;font-weight:400;">1758</div>
<div class="a" style="left:628px;top:782.5px;width:136px;height:15px;background:linear-gradient(to right,#efeff0 0%,#ececed 30%,#efeff0 60%,#f2f2f3 82%,rgba(255,255,255,0) 100%);-webkit-mask-image:linear-gradient(to bottom,rgba(0,0,0,0.3) 0,#000 18%,#000 82%,rgba(0,0,0,0.3) 100%)"></div>
<svg class="a" style="left:890px;top:770px;" width="17" height="13" viewBox="0 0 17 13"><path d="M1.2 6.5 Q8.5 -2.5 15.8 6.5 Q8.5 15.5 1.2 6.5 Z" fill="none" stroke="#1f9a57" stroke-width="1.5" stroke-linejoin="round"/><circle cx="8.5" cy="6.5" r="2" fill="none" stroke="#1f9a57" stroke-width="1.4"/></svg>
<div class="t" style="left:1350px;top:758.80px;font-size:15px;line-height:20px;color:#15151c;font-weight:400;">Feb 23, 2023, 3:04 PM</div>
<div class="t" style="left:1350px;top:780.16px;font-size:13.4px;line-height:17px;color:#5b5b60;font-weight:400;">Created by API</div>
<div class="a" style="left:1550px;top:0;width:49px;height:992px;overflow:hidden"><div class="t" style="left:0px;top:758.80px;font-size:15px;line-height:20px;color:#15151c;font-weight:400;">Jul 19, 2023</div><div class="t" style="left:0px;top:780.16px;font-size:13.4px;line-height:17px;color:#5b5b60;font-weight:400;">Internal</div></div>
<svg class="a" style="left:1638px;top:777px;" width="14" height="5" viewBox="0 0 14 5"><rect x="1" y="1.4" width="2.3" height="2.3" rx="0.5" fill="#1a1a88"/><rect x="5.6" y="1.4" width="2.3" height="2.3" rx="0.5" fill="#1a1a88"/><rect x="10.2" y="1.4" width="2.3" height="2.3" rx="0.5" fill="#1a1a88"/></svg>
<div class="a" style="left:427px;top:842px;width:13px;height:13px;background:#fff;border:1.3px solid #6d6d72;border-radius:2px"></div>
<svg class="a" style="left:475px;top:822px;overflow:hidden" width="99" height="56" viewBox="0 0 99 56"><defs><filter id="cb" x="-20%" y="-20%" width="140%" height="140%"><feGaussianBlur stdDeviation="1.6"/></filter><filter id="cb2" x="-50%" y="-50%" width="200%" height="200%"><feGaussianBlur stdDeviation="4"/></filter><linearGradient id="cg" x1="0" y1="0" x2="0" y2="1"><stop offset="0" stop-color="#c9506c"/><stop offset="0.35" stop-color="#cf6480"/><stop offset="0.5" stop-color="#a84058"/><stop offset="0.62" stop-color="#4e0a18"/><stop offset="1" stop-color="#2a0409"/></linearGradient></defs><rect width="99" height="56" fill="url(#cg)"/><g filter="url(#cb2)"><ellipse cx="56" cy="12" rx="9" ry="14" fill="#f2b8e6" opacity="0.9"/><ellipse cx="94" cy="14" rx="7" ry="13" fill="#8a2aa0"/><ellipse cx="10" cy="18" rx="8" ry="9" fill="#e8a0b0" opacity="0.7"/></g><g filter="url(#cb)"><rect x="28" y="15" width="14" height="14" fill="#c8b0d8" opacity="0.75"/><rect x="18" y="24" width="22" height="7" fill="#7a4a8a" opacity="0.8"/><circle cx="4" cy="12" r="2.5" fill="#fff" opacity="0.8"/><circle cx="37" cy="16" r="2" fill="#fff" opacity="0.9"/><circle cx="70" cy="10" r="2" fill="#f4e0f0"/><circle cx="88" cy="24" r="2.5" fill="#f0c0e0"/><ellipse cx="10" cy="44" rx="12" ry="8" fill="#3a0610"/><ellipse cx="52" cy="40" rx="8" ry="10" fill="#3a0814"/><ellipse cx="80" cy="40" rx="12" ry="9" fill="#4a0a18"/><circle cx="12" cy="38" r="2.2" fill="#ffd8e8"/><circle cx="41" cy="45" r="2.5" fill="#ffe0f0"/><circle cx="93" cy="40" r="2.8" fill="#fff0f8"/><circle cx="26" cy="33" r="2" fill="#ff9ab8"/><circle cx="64" cy="33" r="1.8" fill="#f0a0c0"/></g></svg>
<div class="a" style="left:534px;top:854px;width:30px;height:16px;background:#06102e"></div>
<div class="t" style="left:537.5px;top:854.67px;font-size:12.5px;line-height:16px;color:#e8ecf8;font-weight:400;">4:28</div>
<div class="a" style="left:598px;top:831px;width:38px;height:20px;background:#fde3a6;border:1px solid #f3c766;border-radius:2px"></div>
<div class="t" style="left:602px;top:830.80px;font-size:15px;line-height:20px;color:#12127a;font-weight:700;">Test</div>
<div class="t" style="left:640px;top:830.80px;font-size:15px;line-height:20px;color:#12127a;font-weight:700;">mp4</div>
<div class="t" style="left:599px;top:854.50px;font-size:13px;line-height:17px;color:#4a4a4e;font-weight:400;">17</div>
<div class="a" style="left:610px;top:855.5px;width:154px;height:15px;background:linear-gradient(to right,#efeff0 0%,#ececed 30%,#efeff0 60%,#f2f2f3 82%,rgba(255,255,255,0) 100%);-webkit-mask-image:linear-gradient(to bottom,rgba(0,0,0,0.3) 0,#000 18%,#000 82%,rgba(0,0,0,0.3) 100%)"></div>
<svg class="a" style="left:890px;top:843px;" width="17" height="13" viewBox="0 0 17 13"><path d="M1.2 6.5 Q8.5 -2.5 15.8 6.5 Q8.5 15.5 1.2 6.5 Z" fill="none" stroke="#1f9a57" stroke-width="1.5" stroke-linejoin="round"/><circle cx="8.5" cy="6.5" r="2" fill="none" stroke="#1f9a57" stroke-width="1.4"/></svg>
<div class="t" style="left:1350px;top:831.80px;font-size:15px;line-height:20px;color:#15151c;font-weight:400;">Dec 22, 2022, 2:41 PM</div>
<div class="t" style="left:1350px;top:853.16px;font-size:13.4px;line-height:17px;color:#1c1c8a;font-weight:400;">You</div>
<div class="a" style="left:1550px;top:0;width:49px;height:992px;overflow:hidden"><div class="t" style="left:0px;top:831.80px;font-size:15px;line-height:20px;color:#15151c;font-weight:400;">Dec 22, 2022</div><div class="t" style="left:0px;top:853.16px;font-size:13.4px;line-height:17px;color:#1c1c8a;font-weight:400;">You</div></div>
<svg class="a" style="left:1638px;top:850px;" width="14" height="5" viewBox="0 0 14 5"><rect x="1" y="1.4" width="2.3" height="2.3" rx="0.5" fill="#1a1a88"/><rect x="5.6" y="1.4" width="2.3" height="2.3" rx="0.5" fill="#1a1a88"/><rect x="10.2" y="1.4" width="2.3" height="2.3" rx="0.5" fill="#1a1a88"/></svg>
<div class="a" style="left:427px;top:915px;width:13px;height:13px;background:#fff;border:1.3px solid #6d6d72;border-radius:2px"></div>
<svg class="a" style="left:475px;top:895px;overflow:hidden" width="99" height="56" viewBox="0 0 99 56"><rect width="99" height="56" fill="#8f8f91"/><rect x="5.5" y="5" width="89" height="46" fill="none" stroke="#ececec" stroke-width="1.4"/><circle cx="35.7" cy="17.8" r="4.6" fill="none" stroke="#ececec" stroke-width="1.4"/><path d="M35.5 51 L69 15 L95 40" fill="none" stroke="#ececec" stroke-width="1.4"/></svg>
<div class="a" style="left:598px;top:904px;width:36px;height:20px;background:#fde3a6;border:1px solid #f3c766;border-radius:2px"></div>
<div class="t" style="left:602px;top:903.80px;font-size:15px;line-height:20px;color:#12127a;font-weight:700;">test</div>
<div class="t" style="left:638px;top:903.80px;font-size:15px;line-height:20px;color:#12127a;font-weight:700;">event</div>
<svg class="a" style="left:890px;top:916px;" width="17" height="13" viewBox="0 0 17 13"><path d="M1.2 6.5 Q8.5 -2.5 15.8 6.5 Q8.5 15.5 1.2 6.5 Z" fill="none" stroke="#1f9a57" stroke-width="1.5" stroke-linejoin="round"/><circle cx="8.5" cy="6.5" r="2" fill="none" stroke="#1f9a57" stroke-width="1.4"/></svg>
<div class="t" style="left:1350px;top:904.80px;font-size:15px;line-height:20px;color:#15151c;font-weight:400;">Nov 1, 2023, 11:49 AM</div>
<div class="t" style="left:1350px;top:926.16px;font-size:13.4px;line-height:17px;color:#5b5b60;font-weight:400;">Created by API</div>
<div class="a" style="left:1550px;top:0;width:49px;height:992px;overflow:hidden"><div class="t" style="left:0px;top:904.80px;font-size:15px;line-height:20px;color:#15151c;font-weight:400;">Nov 1, 2023</div><div class="t" style="left:0px;top:926.16px;font-size:13.4px;line-height:17px;color:#1c1c8a;font-weight:400;">You</div></div>
<svg class="a" style="left:1638px;top:923px;" width="14" height="5" viewBox="0 0 14 5"><rect x="1" y="1.4" width="2.3" height="2.3" rx="0.5" fill="#1a1a88"/><rect x="5.6" y="1.4" width="2.3" height="2.3" rx="0.5" fill="#1a1a88"/><rect x="10.2" y="1.4" width="2.3" height="2.3" rx="0.5" fill="#1a1a88"/></svg></div></div>
</body></html>
